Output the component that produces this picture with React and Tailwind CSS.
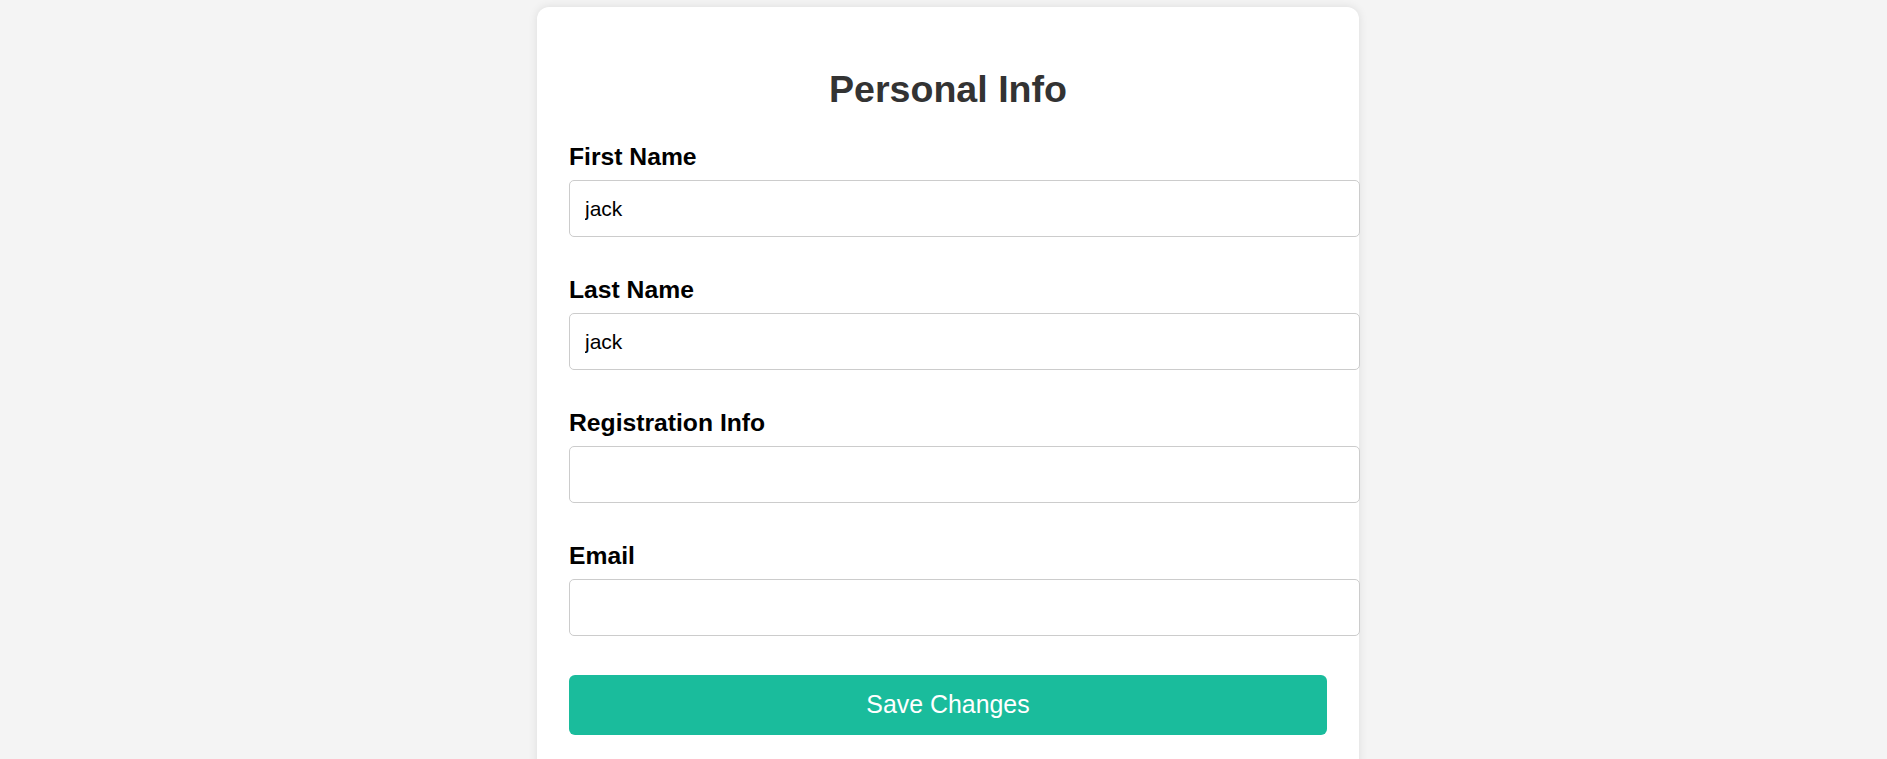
export default function App() {
  const fields = [
    { label: "First Name", value: "jack" },
    { label: "Last Name", value: "jack" },
    { label: "Registration Info", value: "" },
    { label: "Email", value: "" },
  ];
  return (
    <div
      className="h-[759px] w-full overflow-hidden bg-[#f4f4f4] flex justify-center pl-[9px] pt-[7px]"
      style={{ fontFamily: '"Liberation Sans", Arial, sans-serif' }}
    >
      <div className="w-[822px] h-[800px] shrink-0 bg-white rounded-[12px] shadow-[0_0_10px_rgba(0,0,0,0.1)] px-[32px] pt-[61px]">
        <h2 className="text-[37.6px] leading-[42px] font-bold text-[#333] text-center mb-[33px]">
          Personal Info
        </h2>
        {fields.map((f) => (
          <div key={f.label} className="mb-[39px]">
            <label className="block text-[24.7px] leading-[28px] font-bold text-black mb-[9px]">
              {f.label}
            </label>
            <input
              type="text"
              defaultValue={f.value}
              className="block w-[791px] h-[57px] border border-[#ccc] rounded-[5px] px-[15px] text-[21px] text-black bg-white outline-none"
              style={{ fontFamily: '"Liberation Sans", Arial, sans-serif' }}
            />
          </div>
        ))}
        <button className="w-full h-[60px] bg-[#1abc9c] text-white text-[24.9px] rounded-[6px]">
          Save Changes
        </button>
      </div>
    </div>
  );
}
